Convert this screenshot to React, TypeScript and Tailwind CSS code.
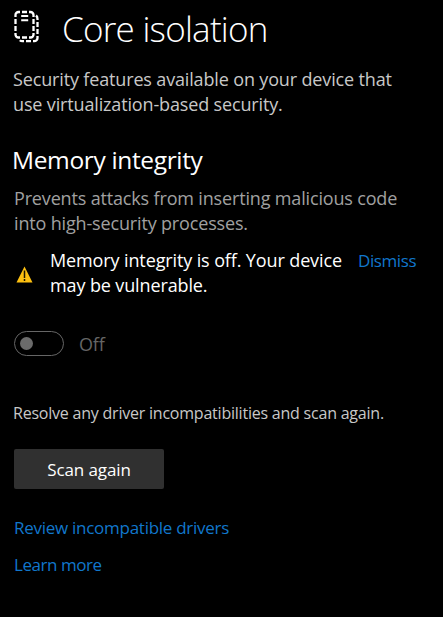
function CoreIsolationIcon() {
  return (
    <svg width="26" height="34" viewBox="0 0 26 34" fill="none" stroke="#fff" strokeWidth="2.300">
      <path d="M2.500 7V5a3 3 0 0 1 3-3h1.500M9 2h5M16 2h1.500a3 3 0 0 1 3 3v2M20.500 9v5M20.500 16v5M20.500 23v1.500a3 3 0 0 1-3 3H16M14 27.500H9M7 27.500H5.500a3 3 0 0 1-3-3V23M2.500 21v-5M2.500 14V9" />
      <path d="M23 5.500c1 .800 1.500 2 1.500 3.500v1M24.500 12v5M24.500 19v5M24.500 26v2a3.200 3.200 0 0 1-3.200 3.200H20M18 31.200h-5M11 31.200H9.500c-1 0-2-.300-2.700-1" />
      <path d="M8.200 6h7M8.200 10.300h7" strokeWidth="2" />
    </svg>
  );
}

function WarningIcon() {
  return (
    <svg width="17" height="17" viewBox="0 0 17 17">
      <path d="M8.500.5 16.500 16.500H.5Z" fill="#fdc010" />
      <path d="M8.500 4.500v7.500M8.500 13v2" stroke="#201600" strokeWidth="1.500" />
    </svg>
  );
}

export default function App() {
  return (
    <main className="h-[617px] w-[443px] overflow-hidden bg-black pt-1 pl-[13px] font-['Open_Sans',sans-serif] text-[18px] leading-[25px] tracking-[-0.15px] whitespace-nowrap text-white">
      <header className="flex h-12 items-center">
        <div className="-mt-0.5 w-[49px]">
          <CoreIsolationIcon />
        </div>
        <h1 className="pt-px text-[35px] leading-[48px] font-light tracking-[-0.75px]">Core isolation</h1>
      </header>

      <p className="mt-[15px] text-[#c8c8c8]">
        Security features available on your device that
        <br />
        use virtualization-based security.
      </p>

      <section>
        <h2 className="mt-[27px] -ml-px text-[24.5px] leading-8 tracking-[-0.35px]">Memory integrity</h2>
        <p className="mt-2.5 ml-px tracking-[-0.16px] text-[#a0a0a0]">
          Prevents attacks from inserting malicious code
          <br />
          into high-security processes.
        </p>

        <div className="mt-3 flex">
          <div className="w-[37px] pt-[18px] pl-[3px]">
            <WarningIcon />
          </div>
          <p className="w-[308px] tracking-[-0.12px]">
            Memory integrity is off. Your device
            <br />
            may be vulnerable.
          </p>
          <a href="#" className="text-[17px] tracking-[-0.4px] text-[#1177cc]">Dismiss</a>
        </div>

        <div className="mt-[33px] ml-px flex h-[25px] items-center gap-[15px]">
          <button className="flex h-[25px] w-[50px] items-center rounded-full border border-[#666] pl-[5px]">
            <span className="size-[13px] rounded-full bg-[#6b6b6b]" />
          </button>
          <span className="pt-0.5 text-[#666]">Off</span>
        </div>
      </section>

      <p className="mt-[45px] text-[16px] leading-6 tracking-[-0.22px] text-[#c8c8c8]">
        Resolve any driver incompatibilities and scan again.
      </p>
      <button className="mt-6 ml-px block h-10 w-[150px] rounded-[2px] bg-[#303030] text-[17px] tracking-[-0.1px]">
        Scan again
      </button>

      <nav className="mt-[26px] ml-px flex flex-col gap-3 text-[17px] tracking-[-0.27px] text-[#1177cc]">
        <a href="#">Review incompatible drivers</a>
        <a href="#" className="tracking-[-0.45px]">Learn more</a>
      </nav>
    </main>
  );
}
